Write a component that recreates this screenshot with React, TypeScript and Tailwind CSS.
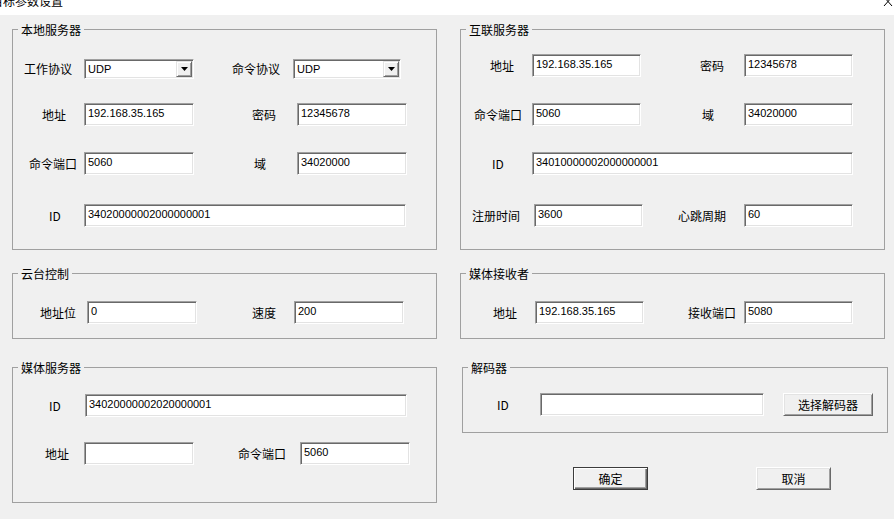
const cjk = "font-['Noto_Sans_CJK_SC',sans-serif]";
const sunken =
  "bg-white border border-t-[#a0a0a0] border-l-[#a0a0a0] border-b-white border-r-white shadow-[inset_1px_1px_0_#696969,inset_-1px_-1px_0_#e3e3e3]";

function Label({ text, className }: { text: string; className: string }) {
  return (
    <span className={`${cjk} shrink-0 whitespace-nowrap text-[12px] leading-[14px] text-black ${className}`}>
      {text}
    </span>
  );
}

function Field({ value = "", className }: { value?: string; className: string }) {
  return (
    <div
      className={`${sunken} shrink-0 h-[23px] pl-[3px] pt-[2px] font-['Liberation_Sans',sans-serif] text-[11px] leading-[14px] text-black ${className}`}
    >
      {value}
    </div>
  );
}

function Combo({ className }: { className: string }) {
  return (
    <div className={`${sunken} shrink-0 h-[20px] flex items-center justify-between pl-[3px] pr-[1px] ${className}`}>
      <span className="font-['Liberation_Sans',sans-serif] text-[11px] leading-[14px] text-black">UDP</span>
      <div className="w-[16px] h-[16px] bg-[#f0f0f0] border border-t-[#e3e3e3] border-l-[#e3e3e3] border-b-[#696969] border-r-[#696969] shadow-[inset_1px_1px_0_#ffffff,inset_-1px_-1px_0_#a0a0a0] flex items-center justify-center">
        <svg width="7" height="4" viewBox="0 0 7 4">
          <path d="M0 0 H7 L3.5 4 Z" fill="#000" />
        </svg>
      </div>
    </div>
  );
}

function Group({ title, className, children }: { title: string; className: string; children: React.ReactNode }) {
  return (
    <fieldset className={`border border-[#a0a0a0] min-w-0 ${className}`}>
      <legend className={`${cjk} ml-[5px] px-[3px] text-[12px] leading-[13px] text-black`}>{title}</legend>
      {children}
    </fieldset>
  );
}

function Button({ text, primary, className }: { text: string; primary?: boolean; className: string }) {
  const frame = primary
    ? "border border-[#3c3c3c] shadow-[inset_1px_1px_0_#ffffff,inset_-1px_-1px_0_#696969,inset_-2px_-2px_0_#a0a0a0]"
    : "border border-t-white border-l-white border-b-[#696969] border-r-[#696969] shadow-[inset_1px_1px_0_#e3e3e3,inset_-1px_-1px_0_#a0a0a0]";
  return (
    <div
      className={`${cjk} ${frame} shrink-0 h-[23px] bg-[#f0f0f0] flex items-center justify-center text-[12px] leading-[14px] text-black ${className}`}
    >
      {text}
    </div>
  );
}

export default function App() {
  return (
    <div className="w-[894px] h-[519px] bg-[#f0f0f0] overflow-hidden">
      <div className="h-[15px] bg-white overflow-hidden flex justify-between">
        <span className={`${cjk} block -ml-[9px] -mt-[5px] text-[12px] leading-[12px] text-black whitespace-nowrap`}>
          目标参数设置
        </span>
        <svg className="-mt-[4px] mr-[1px]" width="10" height="11" viewBox="0 0 10 11">
          <path d="M1 1 L9 10 M9 1 L1 10" stroke="#000" strokeWidth="1" fill="none" />
        </svg>
      </div>

      <div className="flex pt-[8px] pl-[12px] gap-[23px]">
        {/* left column */}
        <div className="w-[425px] flex flex-col">
          <Group title="本地服务器" className="pb-[22px]">
            <div className="mt-[23px] h-[20px] flex items-center">
              <Label text="工作协议" className="ml-[11px] w-[48px]" />
              <Combo className="ml-[12px] w-[110px]" />
              <Label text="命令协议" className="ml-[38px] w-[48px]" />
              <Combo className="ml-[13px] w-[108px]" />
            </div>
            <div className="mt-[24px] h-[23px] flex items-center">
              <Label text="地址" className="ml-[29px] w-[24px]" />
              <Field value="192.168.35.165" className="ml-[18px] w-[110px]" />
              <Label text="密码" className="ml-[58px] w-[24px]" />
              <Field value="12345678" className="ml-[21px] w-[110px]" />
            </div>
            <div className="mt-[26px] h-[23px] flex items-center">
              <Label text="命令端口" className="ml-[16px] w-[48px]" />
              <Field value="5060" className="ml-[7px] w-[110px]" />
              <Label text="域" className="ml-[60px] w-[12px]" />
              <Field value="34020000" className="ml-[31px] w-[110px]" />
            </div>
            <div className="mt-[29px] h-[23px] flex items-center">
              <Label text="ID" className="ml-[36px] w-[12px]" />
              <Field value="34020000002000000001" className="ml-[23px] w-[322px]" />
            </div>
          </Group>

          <Group title="云台控制" className="mt-[17px] pb-[14px]">
            <div className="mt-[21px] h-[23px] flex items-center">
              <Label text="地址位" className="ml-[27px] w-[36px]" />
              <Field value="0" className="ml-[11px] w-[110px]" />
              <Label text="速度" className="ml-[55px] w-[24px]" />
              <Field value="200" className="ml-[18px] w-[110px]" />
            </div>
          </Group>

          <Group title="媒体服务器" className="mt-[22px] pb-[37px]">
            <div className="mt-[20px] h-[23px] flex items-center">
              <Label text="ID" className="ml-[36px] w-[12px]" />
              <Field value="34020000002020000001" className="ml-[24px] w-[322px]" />
            </div>
            <div className="mt-[25px] h-[23px] flex items-center">
              <Label text="地址" className="ml-[32px] w-[24px]" />
              <Field className="ml-[15px] w-[110px]" />
              <Label text="命令端口" className="ml-[44px] w-[48px]" />
              <Field value="5060" className="ml-[14px] w-[110px]" />
            </div>
          </Group>
        </div>

        {/* right column */}
        <div className="w-[427px] flex flex-col">
          <Group title="互联服务器" className="w-[425px] pb-[22px]">
            <div className="mt-[18px] h-[23px] flex items-center">
              <Label text="地址" className="ml-[29px] w-[24px]" />
              <Field value="192.168.35.165" className="ml-[18px] w-[109px]" />
              <Label text="密码" className="ml-[59px] w-[24px]" />
              <Field value="12345678" className="ml-[20px] w-[109px]" />
            </div>
            <div className="mt-[26px] h-[23px] flex items-center">
              <Label text="命令端口" className="ml-[13px] w-[48px]" />
              <Field value="5060" className="ml-[10px] w-[109px]" />
              <Label text="域" className="ml-[61px] w-[12px]" />
              <Field value="34020000" className="ml-[30px] w-[109px]" />
            </div>
            <div className="mt-[26px] h-[23px] flex items-center">
              <Label text="ID" className="ml-[31px] w-[12px]" />
              <Field value="34010000002000000001" className="ml-[28px] w-[321px]" />
            </div>
            <div className="mt-[29px] h-[23px] flex items-center">
              <Label text="注册时间" className="ml-[11px] w-[48px]" />
              <Field value="3600" className="ml-[14px] w-[109px]" />
              <Label text="心跳周期" className="ml-[35px] w-[48px]" />
              <Field value="60" className="ml-[18px] w-[109px]" />
            </div>
          </Group>

          <Group title="媒体接收者" className="w-[425px] mt-[17px] pb-[14px]">
            <div className="mt-[21px] h-[23px] flex items-center">
              <Label text="地址" className="ml-[32px] w-[24px]" />
              <Field value="192.168.35.165" className="ml-[18px] w-[109px]" />
              <Label text="接收端口" className="ml-[44px] w-[48px]" />
              <Field value="5080" className="ml-[8px] w-[109px]" />
            </div>
          </Group>

          <Group title="解码器" className="ml-[2px] w-[426px] mt-[22px] pb-[16px]">
            <div className="mt-[19px] h-[23px] flex items-center">
              <Label text="ID" className="ml-[34px] w-[12px]" />
              <Field className="ml-[31px] w-[224px]" />
              <Button text="选择解码器" className="ml-[19px] w-[90px]" />
            </div>
          </Group>

          <div className="mt-[34px] flex">
            <Button text="确定" primary className="ml-[113px] w-[75px]" />
            <Button text="取消" className="ml-[108px] w-[75px]" />
          </div>
        </div>
      </div>
    </div>
  );
}
